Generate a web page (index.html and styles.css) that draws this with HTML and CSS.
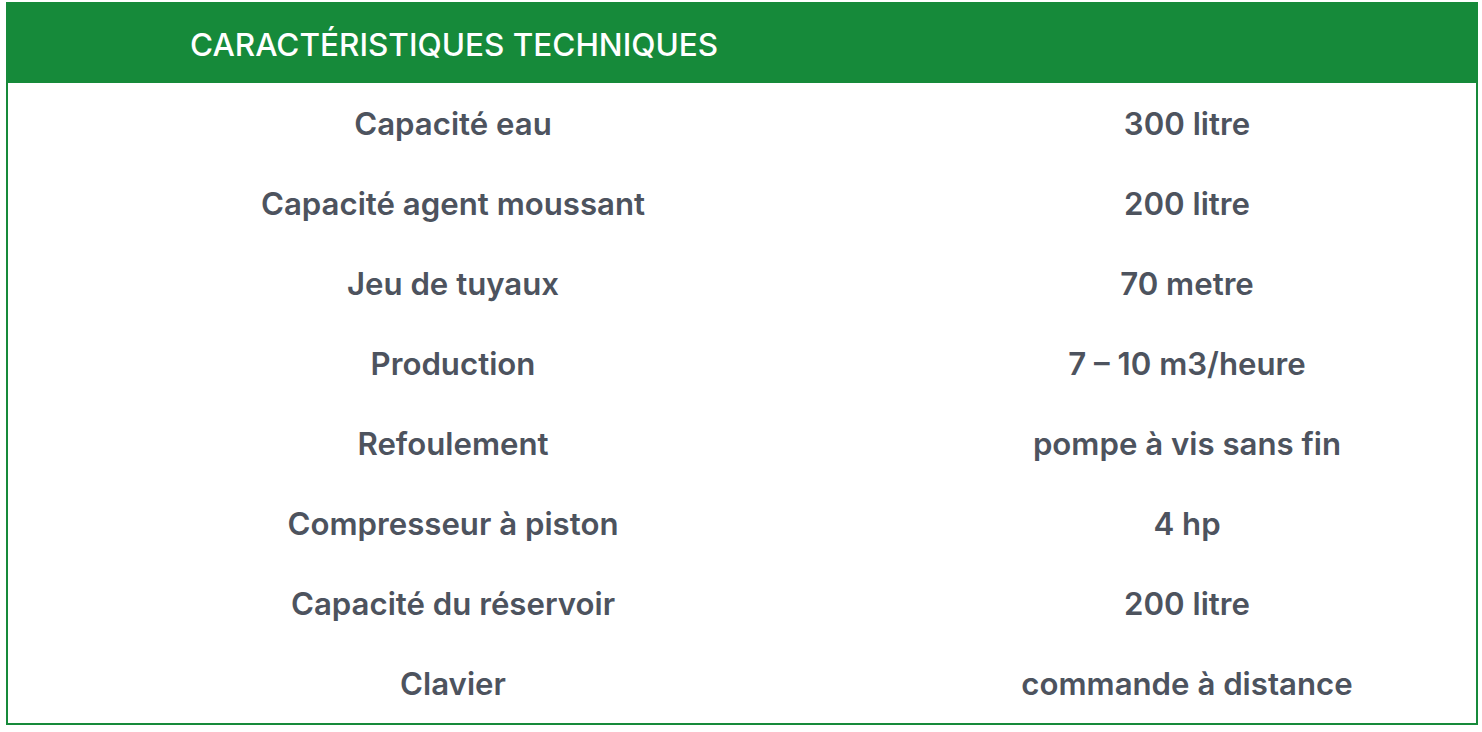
FILE: index.html
```html
<!DOCTYPE html>
<html lang="fr">
<head>
<meta charset="utf-8">
<title>Caractéristiques techniques</title>
<link rel="stylesheet" href="styles.css">
</head>
<body>
<div class="specs">
  <div class="specs-head">CARACTÉRISTIQUES TECHNIQUES</div>
  <div class="specs-body">
    <div class="row"><div class="cell label">Capacité eau</div><div class="cell value">300 litre</div></div>
    <div class="row"><div class="cell label">Capacité agent moussant</div><div class="cell value">200 litre</div></div>
    <div class="row"><div class="cell label">Jeu de tuyaux</div><div class="cell value">70 metre</div></div>
    <div class="row"><div class="cell label">Production</div><div class="cell value">7 – 10 m3/heure</div></div>
    <div class="row"><div class="cell label">Refoulement</div><div class="cell value">pompe à vis sans fin</div></div>
    <div class="row"><div class="cell label">Compresseur à piston</div><div class="cell value">4 hp</div></div>
    <div class="row"><div class="cell label">Capacité du réservoir</div><div class="cell value">200 litre</div></div>
    <div class="row"><div class="cell label">Clavier</div><div class="cell value">commande à distance</div></div>
  </div>
</div>
</body>
</html>
```
FILE: styles.css
```css
html, body {
  margin: 0;
  padding: 0;
  background: #ffffff;
}
body {
  font-family: Inter, "Liberation Sans", sans-serif;
}
.specs {
  margin: 2px 4px 0 6px;
  width: 1472px;
  box-sizing: border-box;
  border: 2px solid #168a3a;
}
.specs-head {
  background: #168a3a;
  color: #ffffff;
  height: 81px;
  box-sizing: border-box;
  margin: -2px -2px 0 -2px;
  padding: 4px 0 0 184px;
  display: flex;
  align-items: center;
  font-size: 31.5px;
  font-weight: 500;
}
.specs-body {
  display: flex;
  flex-direction: column;
}
.row {
  display: grid;
  grid-template-columns: 890px 1fr;
  height: 80px;
}
.cell {
  display: flex;
  align-items: center;
  justify-content: center;
  padding-top: 2px;
  color: #4d535e;
  font-size: 31.2px;
  font-weight: 600;
}
```
